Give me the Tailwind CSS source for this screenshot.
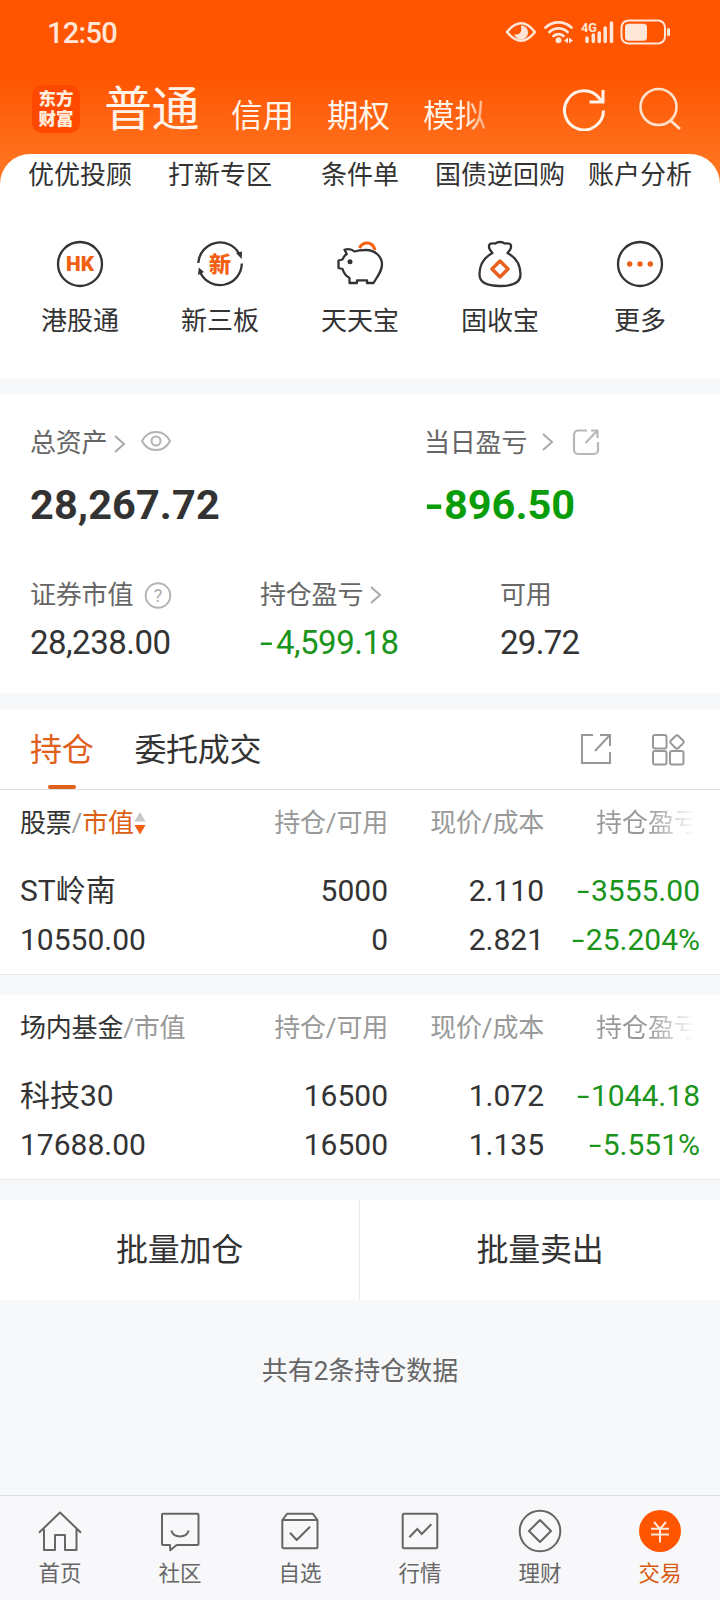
<!DOCTYPE html>
<html lang="zh-CN">

<head>
    <meta charset="UTF-8" />
    <meta name="viewport" content="width=device-width, initial-scale=1.0" />
    <title>东方财富 - 交易</title>
    <script src="https://cdn.jsdelivr.net/npm/@tailwindcss/browser@4"></script>
</head>

<body class="w-[720px] h-[1600px] overflow-hidden flex flex-col bg-[#f7f8fa] text-[#333] font-['Roboto','Noto_Sans_CJK_SC',sans-serif]">

    <!-- Header -->
    <header class="h-[190px] shrink-0 bg-linear-to-b from-[#ff5500] from-40% to-[#ff7a22]">
        <!-- Status bar -->
        <div class="h-16 flex items-center justify-between pl-[47px] pr-11 text-[#ffe6d8]">
            <span class="pt-[3px] text-[29px] tracking-[-0.7px] font-medium">12:50</span>
            <svg class="w-44 h-8" viewBox="500 16 176 32" fill="none" stroke="currentColor" stroke-width="2.4" stroke-linecap="round">
                <path d="M507 32Q521 14.500 535 32Q521 49.500 507 32Z" />
                <path d="M521 25.500a7 7 0 1 1-6.800 8.500c2.500 1.500 6.500 0 7-3.500c.3-2-.2-3.500-.2-5z" fill="currentColor" stroke="none" />
                <path d="M545.500 27.500a19 19 0 0 1 26 0M549.500 32a13 13 0 0 1 18 0M553.500 36a7.500 7.500 0 0 1 10 0" stroke-width="2.800" />
                <circle cx="558.500" cy="40.300" r="3" fill="currentColor" stroke="none" />
                <path d="M568 37.500v6l-4-3zM569 37.500v6l4-3z" fill="currentColor" stroke="none" />
                <text x="581" y="31.500" font-size="13.500" textLength="16" lengthAdjust="spacingAndGlyphs" font-weight="700" fill="currentColor" stroke="none">4G</text>
                <path d="M587 38v3.500M593.300 35v6.500M599.200 33v8.500M605.200 28v13.500M611.500 23v18.500" stroke-width="3.500" />
                <rect x="621.500" y="20.500" width="43.500" height="23" rx="7" stroke-width="2" />
                <rect x="625" y="23.700" width="22" height="17" rx="3.500" fill="currentColor" stroke="none" />
                <path d="M668.500 29.500v5" stroke-width="3" />
            </svg>
        </div>

        <!-- Account tabs -->
        <div class="h-[90px] flex items-center pl-8 pr-[38px] text-[#fff3ea]">
            <div class="size-12 rounded-[10px] bg-[#ff4800] flex flex-col items-center justify-center text-[17.5px] leading-5 font-black text-[#ffeede]">
                <span>东方</span>
                <span>财富</span>
            </div>
            <span class="ml-6 text-[48px] leading-[50px] tracking-[-0.5px] pt-0.5">普通</span>
            <div class="ml-8 pt-[15px] flex gap-[33px] text-[31.5px] leading-10">
                <span>信用</span>
                <span>期权</span>
                <span class="bg-linear-to-r from-[#fff3ea] from-65% to-[#ffa878] bg-clip-text text-transparent">模拟</span>
            </div>
            <svg class="ml-auto size-11" viewBox="0 0 44 44" fill="none" stroke="currentColor" stroke-width="3">
                <path d="M41.500 23.500A19.500 19.500 0 1 1 37.500 11.500L39.500 14" />
                <path d="M41 3v12H27.500" />
            </svg>
            <svg class="ml-8 size-11" viewBox="0 0 44 44" fill="none" stroke="#ffe0ca" stroke-width="2.600">
                <circle cx="20.500" cy="20" r="18" />
                <path d="M32.500 33.500l9.500 8.500" stroke-width="3" />
            </svg>
        </div>
    </header>

    <!-- Shortcuts -->
    <section class="-mt-9 h-[224px] shrink-0 rounded-t-[30px] bg-white px-2.5 text-[26px]">
        <div class="h-10 grid grid-cols-5 text-center leading-[42px] whitespace-nowrap">
            <span>优优投顾</span>
            <span>打新专区</span>
            <span>条件单</span>
            <span>国债逆回购</span>
            <span>账户分析</span>
        </div>
        <div class="mt-[46px] grid grid-cols-5 justify-items-center leading-[42px]">
            <div class="flex flex-col items-center gap-3">
                <svg class="size-12" viewBox="0 0 48 48" fill="none" stroke="#333" stroke-width="2.3">
                    <circle cx="24" cy="24" r="22" />
                    <text x="24" y="31.300" text-anchor="middle" font-size="21" textLength="28" lengthAdjust="spacingAndGlyphs" font-weight="900" fill="#f26011" stroke="none">HK</text>
                </svg>
                <span>港股通</span>
            </div>
            <div class="flex flex-col items-center gap-3">
                <svg class="size-12" viewBox="0 0 48 48" fill="none" stroke="#333" stroke-width="2.3">
                    <path d="M2.300 23A21.800 21.800 0 0 1 43 13.500M45.800 23.500A21.800 21.800 0 0 1 4.500 33" />
                    <path d="M40 13l6-1.500-.3 7.500zM2 35l.8-7.500L8 32z" fill="#333" stroke="none" />
                    <text x="24" y="31.500" text-anchor="middle" font-size="22" font-weight="900" fill="#f26011" stroke="none">新</text>
                </svg>
                <span>新三板</span>
            </div>
            <div class="flex flex-col items-center gap-3">
                <svg class="size-12" viewBox="0 0 48 48" fill="none" stroke="#333" stroke-width="2.3" stroke-linejoin="round">
                    <path d="M2.500 20.500L6.500 19.500C7.300 17 8.700 15.300 10.800 14L8.500 9.800C12 8.700 16 9.300 18.500 11.500C22 10.300 26 10 30 10C39 10 46 16.500 46 24.500C46 30.500 43 34 37.500 43H31V40.300H21V43H13.500V38C10 36 7.500 32.500 6.500 29L2.500 28Z" />
                    <circle cx="14" cy="21.700" r="2.500" fill="#333" stroke="none" />
                    <path d="M23.500 8c1.500-3 4-5 7.500-5s6.700 2.500 8 7" stroke="#f26011" stroke-width="3.200" />
                </svg>
                <span>天天宝</span>
            </div>
            <div class="flex flex-col items-center gap-3">
                <svg class="size-12" viewBox="0 0 48 48" fill="none" stroke="#333" stroke-width="2.3" stroke-linejoin="round">
                    <path d="M16.500 13C13.500 10 12.500 7 13.200 5C14 2.700 17 3.200 19.500 3.500C21.500 1.500 26.500 1.500 28.500 3.500C31 3.200 34 2.700 34.800 5C35.500 7 34.500 10 31.500 13C40 17.500 44.500 25 44.500 34.500C44.500 42 38 46 24 46S3.500 42 3.500 34.500C3.500 25 8 17.500 16.500 13Z" />
                    <path d="M24 21l8 8-8 8-8-8z" stroke="#e8601c" stroke-width="3.400" />
                </svg>
                <span>固收宝</span>
            </div>
            <div class="flex flex-col items-center gap-3">
                <svg class="size-12" viewBox="0 0 48 48" fill="none" stroke="#333" stroke-width="2.3">
                    <circle cx="24" cy="24" r="22" />
                    <g fill="#e8601c" stroke="none">
                        <circle cx="13.700" cy="24" r="2.700" />
                        <circle cx="24" cy="24" r="2.700" />
                        <circle cx="34.300" cy="24" r="2.700" />
                    </g>
                </svg>
                <span>更多</span>
            </div>
        </div>
    </section>

    <!-- Assets -->
    <section class="mt-4 h-[299px] shrink-0 bg-white pl-[30px] pt-[22px]">
        <div class="grid grid-cols-[394px_1fr]">
            <div>
                <div class="h-[52px] pt-0.5 flex items-center text-[26px] tracking-[-0.2px] text-[#666]">
                    总资产
                    <svg class="ml-[7px] mt-0.5 w-3 h-5" viewBox="0 0 12 20" fill="none" stroke="#aaa" stroke-width="2"><path d="M1 2l9 8-9 8" /></svg>
                    <svg class="ml-3.5 -mt-1 w-8 h-6" viewBox="0 0 32 24" fill="none" stroke="#b3b3b3" stroke-width="2">
                        <path d="M2 12C8 0 24 0 30 12C24 24 8 24 2 12Z" />
                        <circle cx="16" cy="12" r="4.500" />
                    </svg>
                </div>
                <div class="h-[72px] leading-[73px] text-[41.5px] tracking-[0.1px] font-bold">28,267.72</div>
            </div>
            <div>
                <div class="h-[52px] pt-0.5 flex items-center text-[26px] tracking-[-0.2px] text-[#666]">
                    当日盈亏
                    <svg class="ml-[15px] -mt-0.5 w-3 h-5" viewBox="0 0 12 20" fill="none" stroke="#aaa" stroke-width="2"><path d="M1 2l9 8-9 8" /></svg>
                    <svg class="ml-[18px] -mt-0.5 size-7" viewBox="0 0 28 28" fill="none" stroke="#b8b8b8" stroke-width="2.2">
                        <path d="M15 2.500H6a4 4 0 0 0-4 4V22a4 4 0 0 0 4 4H22a4 4 0 0 0 4-4V14M13.500 15L25 3M19 2.500H25.500V10" />
                    </svg>
                </div>
                <div class="h-[72px] leading-[73px] text-[41.5px] font-bold text-[#0a9d0a]"><span class="inline-block w-5 origin-left scale-x-125">-</span>896.50</div>
            </div>
        </div>
        <div class="mt-7 grid grid-cols-[230px_240px_1fr]">
            <div>
                <div class="h-[52px] pt-0.5 flex items-center text-[26px] tracking-[-0.2px] text-[#666]">
                    证券市值
                    <svg class="ml-[11px] -mt-px size-7" viewBox="0 0 28 28" fill="none" stroke="#b3b3b3" stroke-width="1.900">
                        <circle cx="14" cy="14.500" r="12.300" />
                        <text x="14" y="21" text-anchor="middle" font-size="18" fill="#aaa" stroke="none">?</text>
                    </svg>
                </div>
                <div class="h-[46px] leading-[46px] text-[33px] tracking-[-0.5px]">28,238.00</div>
            </div>
            <div>
                <div class="h-[52px] pt-0.5 flex items-center text-[26px] tracking-[-0.2px] text-[#666]">
                    持仓盈亏
                    <svg class="ml-[7px] w-3 h-5" viewBox="0 0 12 20" fill="none" stroke="#aaa" stroke-width="2"><path d="M1 2l9 8-9 8" /></svg>
                </div>
                <div class="h-[46px] leading-[46px] text-[33px] tracking-[-0.5px] text-[#1a941a]"><span class="inline-block w-4 origin-left scale-x-140">-</span>4,599.18</div>
            </div>
            <div>
                <div class="h-[52px] pt-0.5 flex items-center text-[26px] tracking-[-0.2px] text-[#666]">可用</div>
                <div class="h-[46px] leading-[46px] text-[33px] tracking-[-0.7px]">29.72</div>
            </div>
        </div>
    </section>

    <!-- Position tabs -->
    <nav class="mt-4 h-[81px] shrink-0 bg-white border-b border-[#dcdfe0] flex items-center pl-[30px] pr-[35px] text-[32px] tracking-[-0.3px]">
        <div class="relative h-20 leading-[82px] text-[#e0601c]">
            持仓
            <span class="absolute left-[18px] bottom-0 w-7 h-1 rounded-full bg-[#e0601c]"></span>
        </div>
        <span class="ml-[41px] pt-0.5">委托成交</span>
        <svg class="ml-auto size-8" viewBox="0 0 32 32" fill="none" stroke="#999" stroke-width="2">
            <path d="M13 2H2V30H30V19M15 18L29 3M20 2H30V13" />
        </svg>
        <svg class="ml-[39px] mt-px w-[34px] h-8" viewBox="0 0 34 32" fill="none" stroke="#999" stroke-width="2">
            <rect x="2" y="1" width="13.500" height="13.500" rx="2" />
            <rect x="2" y="17" width="13.500" height="13.500" rx="2" />
            <rect x="19" y="17" width="13.500" height="13.500" rx="2" />
            <rect x="20.700" y="2.700" width="10.500" height="10.500" rx="2" transform="rotate(45 26 8)" />
        </svg>
    </nav>

    <!-- Stocks -->
    <section class="h-[185px] shrink-0 bg-white border-b border-[#e8eaec] px-5">
        <div class="h-16 pt-0.5 grid grid-cols-[200px_168px_156px_156px] items-center text-right text-[26px] tracking-[-0.2px] text-[#999]">
            <div class="flex items-center">
                <span class="text-[#333]">股票</span>/<span class="text-[#dd5f14]">市值</span>
                <svg class="w-3 h-6" viewBox="0 0 12 24"><path d="M6 1l5.500 9.500H.5z" fill="#c8c8c8" /><path d="M6 23.500L.5 14h11z" fill="#f26011" /></svg>
            </div>
            <span>持仓/可用</span>
            <span>现价/成本</span>
            <span class="justify-self-end tracking-normal bg-linear-to-r from-[#999] from-50% to-white to-95% bg-clip-text text-transparent">持仓盈亏</span>
        </div>
        <div class="pt-3 grid grid-cols-[200px_168px_156px_156px] text-right text-[30px] leading-[49px]">
            <span class="text-left">ST岭南</span>
            <span>5000</span>
            <span>2.110</span>
            <span class="text-[#1a941a]"><span class="inline-block w-3.5 origin-left scale-x-150 text-left">-</span>3555.00</span>
            <span class="text-left">10550.00</span>
            <span>0</span>
            <span>2.821</span>
            <span class="text-[#1a941a]"><span class="inline-block w-3.5 origin-left scale-x-150 text-left">-</span>25.204%</span>
        </div>
    </section>

    <!-- Funds -->
    <section class="mt-5 h-[185px] shrink-0 bg-white border-b border-[#e8eaec] px-5">
        <div class="h-16 pt-0.5 grid grid-cols-[200px_168px_156px_156px] items-center text-right text-[26px] tracking-[-0.2px] text-[#999]">
            <div class="text-left"><span class="text-[#333]">场内基金</span>/市值</div>
            <span>持仓/可用</span>
            <span>现价/成本</span>
            <span class="justify-self-end tracking-normal bg-linear-to-r from-[#999] from-50% to-white to-95% bg-clip-text text-transparent">持仓盈亏</span>
        </div>
        <div class="pt-3 grid grid-cols-[200px_168px_156px_156px] text-right text-[30px] leading-[49px]">
            <span class="text-left">科技30</span>
            <span>16500</span>
            <span>1.072</span>
            <span class="text-[#1a941a]"><span class="inline-block w-3.5 origin-left scale-x-150 text-left">-</span>1044.18</span>
            <span class="text-left">17688.00</span>
            <span>16500</span>
            <span>1.135</span>
            <span class="text-[#1a941a]"><span class="inline-block w-3.5 origin-left scale-x-150 text-left">-</span>5.551%</span>
        </div>
    </section>

    <!-- Batch actions -->
    <div class="mt-5 h-[100px] shrink-0 bg-white grid grid-cols-2 text-center text-[32px] leading-[100px] tracking-[-0.3px]">
        <button class="border-r border-[#e8eaec]">批量加仓</button>
        <button>批量卖出</button>
    </div>

    <p class="h-[195px] shrink-0 pt-[51px] text-center text-[26px] leading-10 text-[#666]">共有2条持仓数据</p>

    <!-- Bottom navigation -->
    <nav class="h-[105px] shrink-0 border-t border-[#dcdfe0] bg-[#f8f8fa] grid grid-cols-6 pt-[11px] text-[21.5px] leading-[38px] text-[#666]">
        <div class="flex flex-col items-center">
            <svg class="size-12" viewBox="0 0 48 48" fill="none" stroke="#666" stroke-width="2" stroke-linejoin="round">
                <path d="M3 25.700L24 5.500L45 25.700M8 22V43H19V28H29V43H40.500V22" />
            </svg>
            <span>首页</span>
        </div>
        <div class="flex flex-col items-center">
            <svg class="size-12" viewBox="0 0 48 48" fill="none" stroke="#666" stroke-width="2" stroke-linejoin="round">
                <path d="M7 6.700H41.500Q42.500 6.700 42.500 7.700V37Q42.500 38 41.500 38H20.700L14.300 43.300L14 38H7Q6 38 6 37V7.700Q6 6.700 7 6.700Z" />
                <path d="M15.300 23.700C18 31.500 30 31.500 32.700 23.700" />
            </svg>
            <span>社区</span>
        </div>
        <div class="flex flex-col items-center">
            <svg class="size-12" viewBox="0 0 48 48" fill="none" stroke="#666" stroke-width="2" stroke-linejoin="round">
                <path d="M6.300 13L11.300 6.700H36.700L41.500 13V39.800Q41.500 41.300 40 41.300H7.800Q6.300 41.300 6.300 39.800ZM6.300 13H41.500M14 25.700L20.700 33L34 19.700" />
            </svg>
            <span>自选</span>
        </div>
        <div class="flex flex-col items-center">
            <svg class="size-12" viewBox="0 0 48 48" fill="none" stroke="#666" stroke-width="2">
                <rect x="6.700" y="6.700" width="34.600" height="34.600" rx="1.500" />
                <path d="M13.300 30.300L21.300 22L25.700 27L35.300 17.300" />
            </svg>
            <span>行情</span>
        </div>
        <div class="flex flex-col items-center">
            <svg class="size-12" viewBox="0 0 48 48" fill="none" stroke="#666" stroke-width="2" stroke-linejoin="round">
                <circle cx="24" cy="24" r="20.300" />
                <path d="M24 13l11 11-11 11-11-11z" />
            </svg>
            <span>理财</span>
        </div>
        <div class="flex flex-col items-center text-[#d9580f]">
            <svg class="size-12" viewBox="0 0 48 48" fill="none" stroke="#ffe9dc" stroke-width="2">
                <circle cx="24" cy="24" r="21" fill="#ff5500" stroke="none" />
                <path d="M18 15L24 22L30 15M15 21.800H33M15 27.500H33M24 22V35.500" />
            </svg>
            <span>交易</span>
        </div>
    </nav>
</body>

</html>
